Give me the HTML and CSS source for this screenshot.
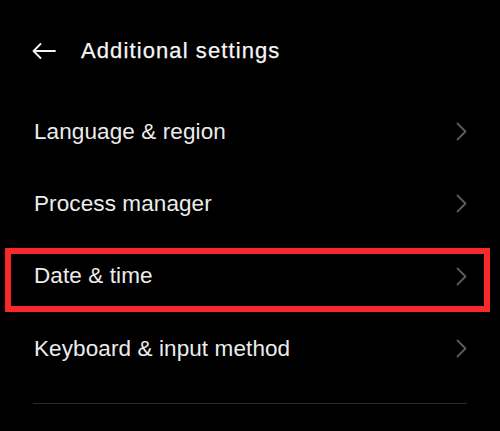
FILE: index.html
```html
<!DOCTYPE html>
<html>
<head>
<meta charset="utf-8">
<link rel="stylesheet" href="styles.css">
</head>
<body>
<div class="screen">
  <header class="topbar">
    <svg class="back" width="24" height="16" viewBox="0 0 24 16" aria-hidden="true">
      <path d="M23 8H1.5M8.5 1L1.5 8l7 7" fill="none" stroke="#f2f2f2" stroke-width="1.8" stroke-linecap="round" stroke-linejoin="round"/>
    </svg>
    <h1 class="title">Additional settings</h1>
  </header>
  <ul class="list">
    <li class="row"><span class="label">Language &amp; region</span><svg class="chev" width="11" height="19" viewBox="0 0 11 19"><path d="M1.5 1.5l8 8-8 8" fill="none" stroke="#5c5c5c" stroke-width="1.8" stroke-linecap="round" stroke-linejoin="round"/></svg></li>
    <li class="row"><span class="label">Process manager</span><svg class="chev" width="11" height="19" viewBox="0 0 11 19"><path d="M1.5 1.5l8 8-8 8" fill="none" stroke="#5c5c5c" stroke-width="1.8" stroke-linecap="round" stroke-linejoin="round"/></svg></li>
    <li class="row highlighted"><span class="label">Date &amp; time</span><svg class="chev" width="11" height="19" viewBox="0 0 11 19"><path d="M1.5 1.5l8 8-8 8" fill="none" stroke="#5c5c5c" stroke-width="1.8" stroke-linecap="round" stroke-linejoin="round"/></svg><span class="mark"></span></li>
    <li class="row"><span class="label">Keyboard &amp; input method</span><svg class="chev" width="11" height="19" viewBox="0 0 11 19"><path d="M1.5 1.5l8 8-8 8" fill="none" stroke="#5c5c5c" stroke-width="1.8" stroke-linecap="round" stroke-linejoin="round"/></svg></li>
  </ul>
  <div class="divider"></div>
</div>
</body>
</html>
```
FILE: styles.css
```css
html, body {
  margin: 0;
  padding: 0;
  background: #000;
}
.screen {
  width: 500px;
  height: 431px;
  overflow: hidden;
  background: #000;
  font-family: "Liberation Sans", Arial, sans-serif;
  color: #ececec;
}
.topbar {
  box-sizing: border-box;
  height: 95px;
  padding: 6px 0 0 32px;
  display: flex;
  align-items: center;
  gap: 25px;
}
.back {
  display: block;
  flex: none;
}
.title {
  margin: 0;
  font-size: 22px;
  font-weight: 400;
  color: #f6f6f6;
  letter-spacing: 1.1px;
  -webkit-text-stroke: 0.25px #f6f6f6;
}
.list {
  list-style: none;
  margin: 0;
  padding: 0;
}
.row {
  position: relative;
  box-sizing: border-box;
  height: 72.3px;
  padding: 1px 33px 0 34px;
  display: flex;
  align-items: center;
  justify-content: space-between;
}
.label {
  font-size: 22.5px;
  letter-spacing: 0.1px;
}
.chev {
  display: block;
  flex: none;
}
.mark {
  position: absolute;
  left: 5px;
  right: 10px;
  top: 8px;
  bottom: 0;
  border: 6.5px solid #f8282b;
  pointer-events: none;
}
.divider {
  margin: 19px 33px 0 33px;
  height: 1px;
  background: #2b2b2b;
}
```
